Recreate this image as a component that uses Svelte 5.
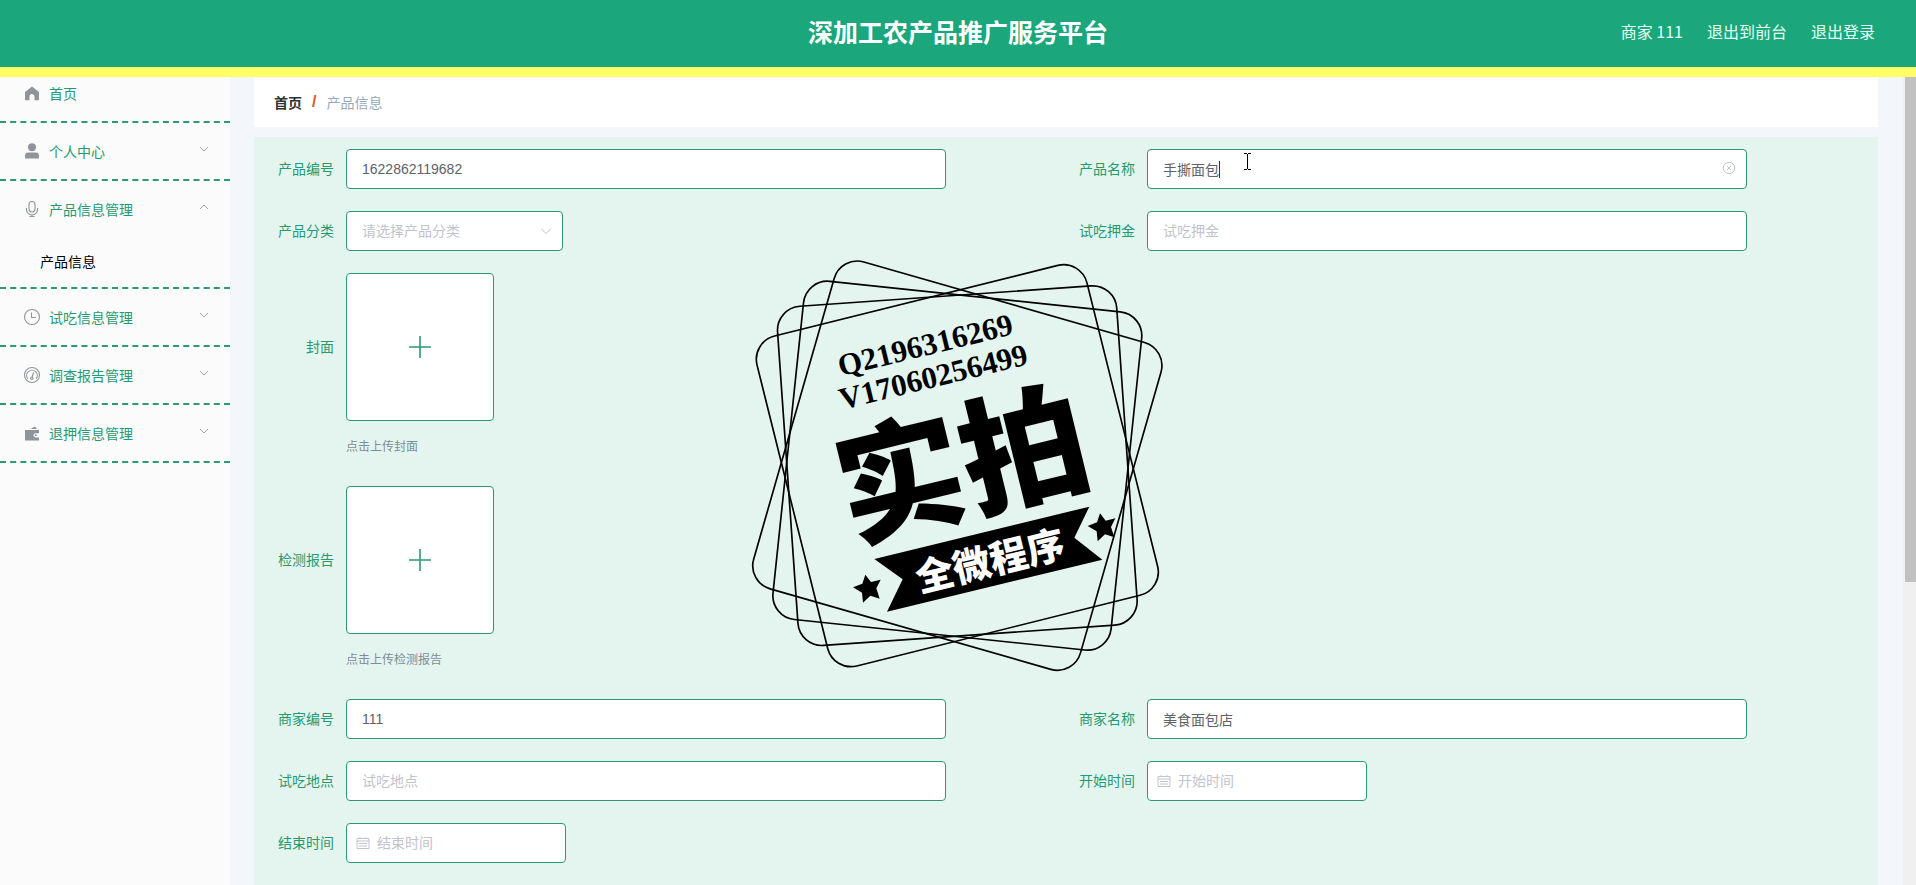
<script>
    let name = '手撕面包';
    let category = '';

    let menus = [
        { title: '首页', icon: 'home' },
        { title: '个人中心', icon: 'user', children: ['个人信息'] },
        { title: '产品信息管理', icon: 'mic', children: ['产品信息'], open: true },
        { title: '试吃信息管理', icon: 'clock', children: ['试吃信息'] },
        { title: '调查报告管理', icon: 'gauge', children: ['调查报告'] },
        { title: '退押信息管理', icon: 'wallet', children: ['退押信息'] }
    ];

    function toggle(i) {
        menus[i].open = !menus[i].open;
    }
</script>

<div class="page">
    <header class="navbar">
        <h1>深加工农产品推广服务平台</h1>
        <div class="nav-right">
            <span>商家 111</span>
            <a href="#front">退出到前台</a>
            <a href="#logout">退出登录</a>
        </div>
    </header>

    <div class="body">
        <nav class="sidebar">
            {#each menus as menu, i}
                <div class="menu">
                    <button type="button" class="menu-title" on:click={() => toggle(i)}>
                        <svg class="menu-icon" viewBox="0 0 18 18">
                            {#if menu.icon === 'home'}
                                <path class="fill" d="M9 2.6 2 8v7.4q0 .8.8.8h3.7v-3.7a2.5 2.5 0 0 1 5 0v3.7h3.7q.8 0 .8-.8V8z" />
                            {:else if menu.icon === 'user'}
                                <circle class="fill" cx="9" cy="5.3" r="4" />
                                <path class="fill" d="M2 16.4v-2.6a3.4 3.4 0 0 1 3.4-3.4h7.2a3.4 3.4 0 0 1 3.4 3.4v2.6z" />
                            {:else if menu.icon === 'mic'}
                                <rect x="6" y="1.5" width="6" height="10.5" rx="3" />
                                <path d="M3.5 8v1.5a5.5 5.5 0 0 0 11 0V8M9 15v1.5M6.5 16.5h5" />
                            {:else if menu.icon === 'clock'}
                                <circle cx="9" cy="9" r="7.5" />
                                <path d="M8.5 4.5v5h4.5" />
                            {:else if menu.icon === 'gauge'}
                                <circle cx="9" cy="9" r="7.5" />
                                <path d="M4.8 12.8a5.3 5.3 0 1 1 8.4 0M9.2 11l1.3-4.5" />
                                <circle cx="8.8" cy="12.2" r="1.2" />
                            {:else}
                                <path class="fill" d="M2 6h14v3.2h-3.4a2.1 2.1 0 0 0 0 4.2H16v3H2zM7.5 5 12 2.6 14 5z" />
                                <circle class="fill" cx="12.8" cy="11.3" r="1" />
                            {/if}
                        </svg>
                        <span>{menu.title}</span>
                        {#if menu.children}
                            <svg class="arrow" class:up={menu.open} viewBox="0 0 12 12">
                                <path d="m2 4 4 4 4-4" />
                            </svg>
                        {/if}
                    </button>
                    {#if menu.open}
                        {#each menu.children as child}
                            <a class="sub" href="#product">{child}</a>
                        {/each}
                    {/if}
                </div>
            {/each}
        </nav>

        <main>
            <div class="breadcrumb">
                <a href="#home">首页</a>
                <b>/</b>
                <span>产品信息</span>
            </div>

            <form class="form">
                <div class="item">
                    <label for="code">产品编号</label>
                    <input id="code" type="text" value="1622862119682" />
                </div>
                <div class="item">
                    <label for="name">产品名称</label>
                    <div class="field">
                        <input id="name" type="text" bind:value={name} />
                        <span class="caret"></span>
                        <button type="button" class="clear" aria-label="清空" on:click={() => (name = '')}>
                            <svg viewBox="0 0 14 14">
                                <circle cx="7" cy="7" r="5.7" />
                                <path d="m5 5 4 4M9 5 5 9" />
                            </svg>
                        </button>
                        <svg class="pointer" viewBox="0 0 7 17">
                            <path d="M0 .5h3M4 .5h3M3.5 1v15M0 16.5h3M4 16.5h3" />
                        </svg>
                    </div>
                </div>
                <div class="item">
                    <label for="category">产品分类</label>
                    <div class="field select">
                        <select id="category" bind:value={category}>
                            <option value="">请选择产品分类</option>
                            <option value="bread">面包</option>
                        </select>
                        <svg class="down" viewBox="0 0 14 14"><path d="m2 4.5 5 5 5-5" /></svg>
                    </div>
                </div>
                <div class="item">
                    <label for="deposit">试吃押金</label>
                    <input id="deposit" type="text" placeholder="试吃押金" />
                </div>
                <div class="item upload">
                    <label for="cover">封面</label>
                    <div>
                        <button type="button" id="cover" class="upload-box">
                            <svg viewBox="0 0 28 28"><path d="M3 14h22M14 3v22" /></svg>
                        </button>
                        <p>点击上传封面</p>
                    </div>
                </div>
                <div class="item upload">
                    <label for="report">检测报告</label>
                    <div>
                        <button type="button" id="report" class="upload-box">
                            <svg viewBox="0 0 28 28"><path d="M3 14h22M14 3v22" /></svg>
                        </button>
                        <p>点击上传检测报告</p>
                    </div>
                </div>
                <div class="item">
                    <label for="shop-code">商家编号</label>
                    <input id="shop-code" type="text" value="111" />
                </div>
                <div class="item">
                    <label for="shop-name">商家名称</label>
                    <input id="shop-name" type="text" value="美食面包店" />
                </div>
                <div class="item">
                    <label for="place">试吃地点</label>
                    <input id="place" type="text" placeholder="试吃地点" />
                </div>
                <div class="item">
                    <label for="start">开始时间</label>
                    <div class="field date">
                        <input id="start" type="text" placeholder="开始时间" />
                        <svg class="calendar" viewBox="0 0 14 14">
                            <path d="M1 2.5h12v10H1zM1 5h12M4 1v2M10 1v2M3 7.5h8M3 10h8" />
                        </svg>
                    </div>
                </div>
                <div class="item">
                    <label for="end">结束时间</label>
                    <div class="field date">
                        <input id="end" type="text" placeholder="结束时间" />
                        <svg class="calendar" viewBox="0 0 14 14">
                            <path d="M1 2.5h12v10H1zM1 5h12M4 1v2M10 1v2M3 7.5h8M3 10h8" />
                        </svg>
                    </div>
                </div>
            </form>
        </main>

        <div class="scrollbar"><div class="thumb"></div></div>
    </div>

    <svg class="stamp" viewBox="0 0 1290 1290">
        {#each [-14, -4, 6, 16] as angle}
            <rect x="142" y="137" width="1020" height="1020" rx="72" transform="rotate({angle} 652 647)" />
        {/each}
        <text class="number" transform="translate(302 379) rotate(-13.7)">Q2196316269</text>
        <text class="number" transform="translate(306 479) rotate(-13.7)">V17060256499</text>
        <text class="big" text-anchor="middle" transform="translate(700 780) rotate(-13.7)">实拍</text>
        <path d="M403 927 1048 770 1003 863 1087 929 441 1085 488 988z" />
        <text class="ribbon" text-anchor="middle" transform="translate(760 973) rotate(-13.7)">全微程序</text>
        <path d="m376 974 17 22 29-7-13 26 10 31-28-9-22 21-3-30-27-16 28-11z" />
        <path d="m1080 790 17 22 29-7-13 26 10 31-28-9-22 21-3-30-27-16 28-11z" />
    </svg>
</div>

<style>
    :global(body) {
        margin: 0;
        background: #f3f6fa;
    }

    .page {
        position: relative;
        display: flex;
        flex-direction: column;
        height: 100vh;
        overflow: hidden;
        font-family: "Liberation Sans", "Noto Sans CJK SC", sans-serif;
        font-size: 14px;
        color: #606266;
    }

    .page * {
        box-sizing: border-box;
    }

    a {
        color: inherit;
        text-decoration: none;
    }

    button,
    input,
    select {
        font: inherit;
        color: inherit;
    }

    .navbar {
        position: relative;
        z-index: 1;
        flex: none;
        display: grid;
        grid-template-columns: 1fr auto 1fr;
        align-items: center;
        height: 77px;
        padding: 0 41px 5px;
        background: #1ba77b;
        border-bottom: 10px solid #ffff66;
        color: #e6fff5;
        font-family: "Noto Sans CJK SC", sans-serif;
    }

    h1 {
        grid-column: 2;
        margin: 0;
        font-size: 25px;
        font-weight: 700;
        color: #fff;
    }

    .nav-right {
        display: flex;
        justify-content: flex-end;
        gap: 24px;
        font-size: 16px;
    }

    .body {
        flex: 1;
        display: flex;
        min-height: 0;
    }

    .sidebar {
        flex: none;
        width: 230px;
        margin-top: -12px;
        background: #fbfbfb;
        color: #259a71;
    }

    .menu {
        border-bottom: 2px dashed #2b9a73;
    }

    .menu-title {
        display: flex;
        align-items: center;
        width: 100%;
        height: 56px;
        padding: 0 20px 0 23px;
        border: 0;
        background: none;
        text-align: left;
        cursor: pointer;
    }

    .menu-icon {
        width: 18px;
        height: 18px;
        margin-right: 8px;
        fill: none;
        stroke: #909399;
        stroke-width: 1.1;
    }

    .menu-icon .fill {
        fill: #909399;
        stroke: none;
    }

    .arrow {
        width: 12px;
        height: 12px;
        margin: 0 0 4px auto;
        fill: none;
        stroke: #a0a3a8;
    }

    .arrow.up {
        transform: rotate(180deg);
    }

    .sub {
        display: block;
        height: 50px;
        padding-left: 40px;
        line-height: 50px;
        color: #000;
    }

    main {
        flex: 1;
        min-width: 0;
        display: flex;
        flex-direction: column;
        padding: 0 25px 0 24px;
        overflow: hidden;
    }

    .breadcrumb {
        flex: none;
        display: flex;
        align-items: center;
        gap: 10px;
        height: 50px;
        margin-bottom: 10px;
        padding: 0 20px;
        background: #fff;
    }

    .breadcrumb a {
        font-weight: 700;
        color: #303133;
    }

    .breadcrumb b {
        font-size: 16px;
        color: #e0522c;
    }

    .breadcrumb span {
        color: #97a8be;
    }

    .form {
        flex: 1 0 auto;
        display: grid;
        grid-template-columns: 1fr 1fr;
        align-content: start;
        gap: 22px 0;
        padding: 12px 10px 22px 12px;
        background: #e4f5ef;
    }

    .item {
        display: flex;
    }

    .item.upload {
        grid-column: 1 / -1;
        height: 191px;
    }

    label {
        flex: none;
        width: 80px;
        padding-right: 12px;
        line-height: 40px;
        text-align: right;
        color: #259a71;
    }

    .upload label {
        line-height: 148px;
    }

    input,
    select {
        width: 600px;
        height: 40px;
        padding: 0 15px;
        border: 1px solid #2b9a73;
        border-radius: 4px;
        background: #fff;
        outline: none;
    }

    input::placeholder {
        color: #c0c4cc;
        opacity: 1;
    }

    .field {
        position: relative;
    }

    .select,
    .select select {
        width: 217px;
    }

    .select select {
        appearance: none;
        color: #c0c4cc;
    }

    .date input {
        width: 220px;
        padding-left: 30px;
    }

    .caret {
        position: absolute;
        top: 12px;
        left: 72px;
        width: 1px;
        height: 17px;
        background: #333;
    }

    .clear {
        position: absolute;
        top: 12px;
        right: 11px;
        display: flex;
        padding: 0;
        border: 0;
        background: none;
    }

    .clear svg,
    .down,
    .calendar {
        width: 14px;
        height: 14px;
        fill: none;
        stroke: #c0c4cc;
    }

    .down {
        position: absolute;
        top: 13px;
        right: 10px;
    }

    .calendar {
        position: absolute;
        top: 13px;
        left: 10px;
    }

    .pointer {
        position: absolute;
        top: 4px;
        left: 97px;
        width: 7px;
        height: 17px;
        fill: none;
        stroke: #000;
    }

    .upload-box {
        display: flex;
        align-items: center;
        justify-content: center;
        width: 148px;
        height: 148px;
        padding: 0;
        border: 1px solid #2b9a73;
        border-radius: 4px;
        background: #fff;
        cursor: pointer;
    }

    .upload-box svg {
        width: 28px;
        height: 28px;
        stroke: #2b9a73;
        stroke-width: 1.6;
    }

    .upload p {
        margin: 16px 0 0;
        font-size: 12px;
        line-height: 20px;
        color: #7f8c99;
    }

    .scrollbar {
        flex: none;
        width: 13px;
        padding-left: 2px;
        background: #f0f0f0;
    }

    .thumb {
        height: 62.5%;
        background: #c1c1c1;
    }

    /* stamp floats over the whole page */
    .stamp {
        position: absolute;
        top: 250px;
        left: calc(50% - 218px);
        width: 430px;
        height: 430px;
        pointer-events: none;
    }

    .stamp rect {
        fill: none;
        stroke: #000;
        stroke-width: 5;
    }

    .number {
        font-family: "Liberation Serif", serif;
        font-size: 93px;
        font-weight: 700;
        fill: #000;
    }

    .big,
    .ribbon {
        font-family: "Noto Sans CJK SC", sans-serif;
        font-weight: 900;
    }

    .big {
        font-size: 380px;
        fill: #000;
    }

    .ribbon {
        font-size: 114px;
        fill: #fff;
    }
</style>
